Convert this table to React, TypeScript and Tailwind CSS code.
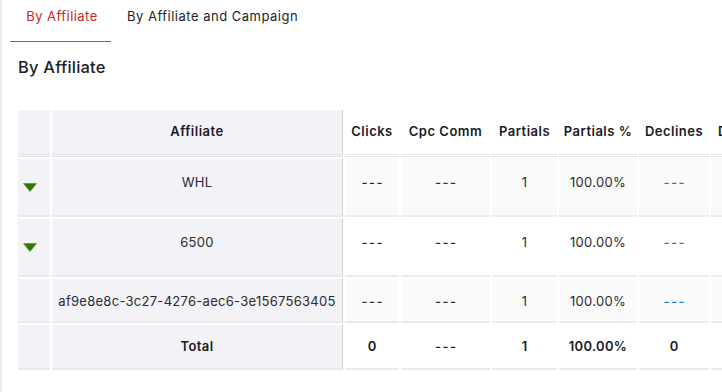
import React from "react";

const font = { fontFamily: "Inter, 'Noto Sans', sans-serif" };

type Row = {
  name: string;
  arrow: boolean;
  tall: boolean;
  bg: string;
};

const rows: Row[] = [
  { name: "WHL", arrow: true, tall: true, bg: "bg-[#fafafa]" },
  { name: "6500", arrow: true, tall: true, bg: "bg-white" },
  { name: "af9e8e8c-3c27-4276-aec6-3e1567563405", arrow: false, tall: false, bg: "bg-[#fafafa]" },
];

function Arrow() {
  return (
    <svg width="14" height="9" viewBox="0 0 14 9" className="block">
      <polygon points="0.5,0.5 13.5,0.5 7,8.5" fill="#2d7a00" stroke="#5a8a10" strokeWidth="0.6" />
    </svg>
  );
}

function Dash({ color }: { color: string }) {
  return <span className={`tracking-[1.6px] pl-[1.6px] font-medium ${color}`}>---</span>;
}

export default function App() {
  const cellBase = "border-b-2 border-[#ebebeb] text-center text-[13px] tracking-[0.28px]";
  const th = "border-b-[3px] border-double text-[13px] font-semibold text-[#1a1a26] tracking-[0.5px] whitespace-nowrap";
  return (
    <div className="w-[722px] h-[392px] overflow-hidden bg-white border-l-2 border-[#ececf0]" style={font}>
      <div className="flex pl-2 h-[42px] items-start">
        <div className="w-[101px] h-[42px] flex items-start justify-center pt-[7px] border-b border-[#c9473f] text-[13px] tracking-[0.45px] text-[#d0232b]">
          <span className="pl-[3px]">By Affiliate</span>
        </div>
        <div className="ml-[16px] pt-[7px] text-[13px] tracking-[0.5px] text-[#1e1e2a]">By Affiliate and Campaign</div>
      </div>
      <div className="pl-4 pt-[13px] h-[66px] text-[16.5px] font-medium tracking-[0.2px] text-[#1e1e2d]">By Affiliate</div>
      <table className="ml-[14px] border-separate border-spacing-[2px] table-fixed w-[787px]">
        <colgroup>
          <col className="w-[32px]" />
          <col className="w-[291px]" />
          <col className="w-[54px]" />
          <col className="w-[89px]" />
          <col className="w-[65px]" />
          <col className="w-[78px]" />
          <col className="w-[70px]" />
          <col className="w-[90px]" />
        </colgroup>
        <thead>
          <tr className="h-[47px]">
            <th className="bg-[#f2f2f7] border-b-[3px] border-double border-[#e4e4ea]"></th>
            <th className={`bg-[#f2f2f7] ${th} border-[#e4e4ea] border-r border-r-[#cfcfd4]`}>Affiliate</th>
            {["Clicks", "Cpc Comm", "Partials", "Partials %", "Declines"].map((h) => (
              <th key={h} className={`bg-white ${th} border-[#e6e6e6] text-center`}>
                {h}
              </th>
            ))}
            <th className={`bg-white ${th} border-[#e6e6e6] text-left pl-[7px]`}>D</th>
          </tr>
        </thead>
        <tbody>
          {rows.map((r) => {
            const vt = r.tall ? "align-top pt-[14px]" : "align-top pt-[13px]";
            const h = r.tall ? "h-[58px]" : "h-[44px]";
            return (
              <tr key={r.name} className={h}>
                <td className={`bg-[#f2f2f7] border-b-2 border-[#e8e8ee] ${r.tall ? "align-top pt-[24px]" : ""}`}>
                  {r.arrow && (
                    <div className="pl-[5px]">
                      <Arrow />
                    </div>
                  )}
                </td>
                <td className={`bg-[#f2f2f7] border-b-2 border-[#e8e8ee] border-r border-r-[#cfcfd4] text-center text-[13px] tracking-[0.28px] text-[#2b2b33] ${vt}`}>{r.name}</td>
                <td className={`${r.bg} ${cellBase} ${vt}`}><Dash color="text-[#2b2b33]" /></td>
                <td className={`${r.bg} ${cellBase} ${vt}`}><Dash color="text-[#2b2b33]" /></td>
                <td className={`${r.bg} ${cellBase} text-[#2b2b33] ${vt}`}>1</td>
                <td className={`${r.bg} ${cellBase} text-[#2b2b33] ${vt}`}>100.00%</td>
                <td className={`${r.bg} ${cellBase} ${vt}`}><Dash color="text-[#1677e0]" /></td>
                <td className={`${r.bg} ${cellBase} ${vt}`}></td>
              </tr>
            );
          })}
          <tr className="h-[45px]">
            <td className="bg-[#f2f2f7] border-b-2 border-[#e8e8ee]"></td>
            <td className="bg-[#f2f2f7] border-b-2 border-[#e8e8ee] border-r border-r-[#cfcfd4] text-center text-[13px] font-semibold tracking-[0.4px] text-[#1a1a26]">Total</td>
            <td className="bg-white border-b-2 border-[#ebebeb] text-center text-[13px] font-semibold text-[#1a1a26]">0</td>
            <td className="bg-white border-b-2 border-[#ebebeb] text-center text-[13px] font-semibold"><Dash color="text-[#1a1a26]" /></td>
            <td className="bg-white border-b-2 border-[#ebebeb] text-center text-[13px] font-semibold text-[#1a1a26]">1</td>
            <td className="bg-white border-b-2 border-[#ebebeb] text-center text-[13px] font-semibold tracking-[0.3px] text-[#1a1a26]">100.00%</td>
            <td className="bg-white border-b-2 border-[#ebebeb] text-center text-[13px] font-semibold text-[#1a1a26]">0</td>
            <td className="bg-white border-b-2 border-[#ebebeb]"></td>
          </tr>
        </tbody>
      </table>
    </div>
  );
}
